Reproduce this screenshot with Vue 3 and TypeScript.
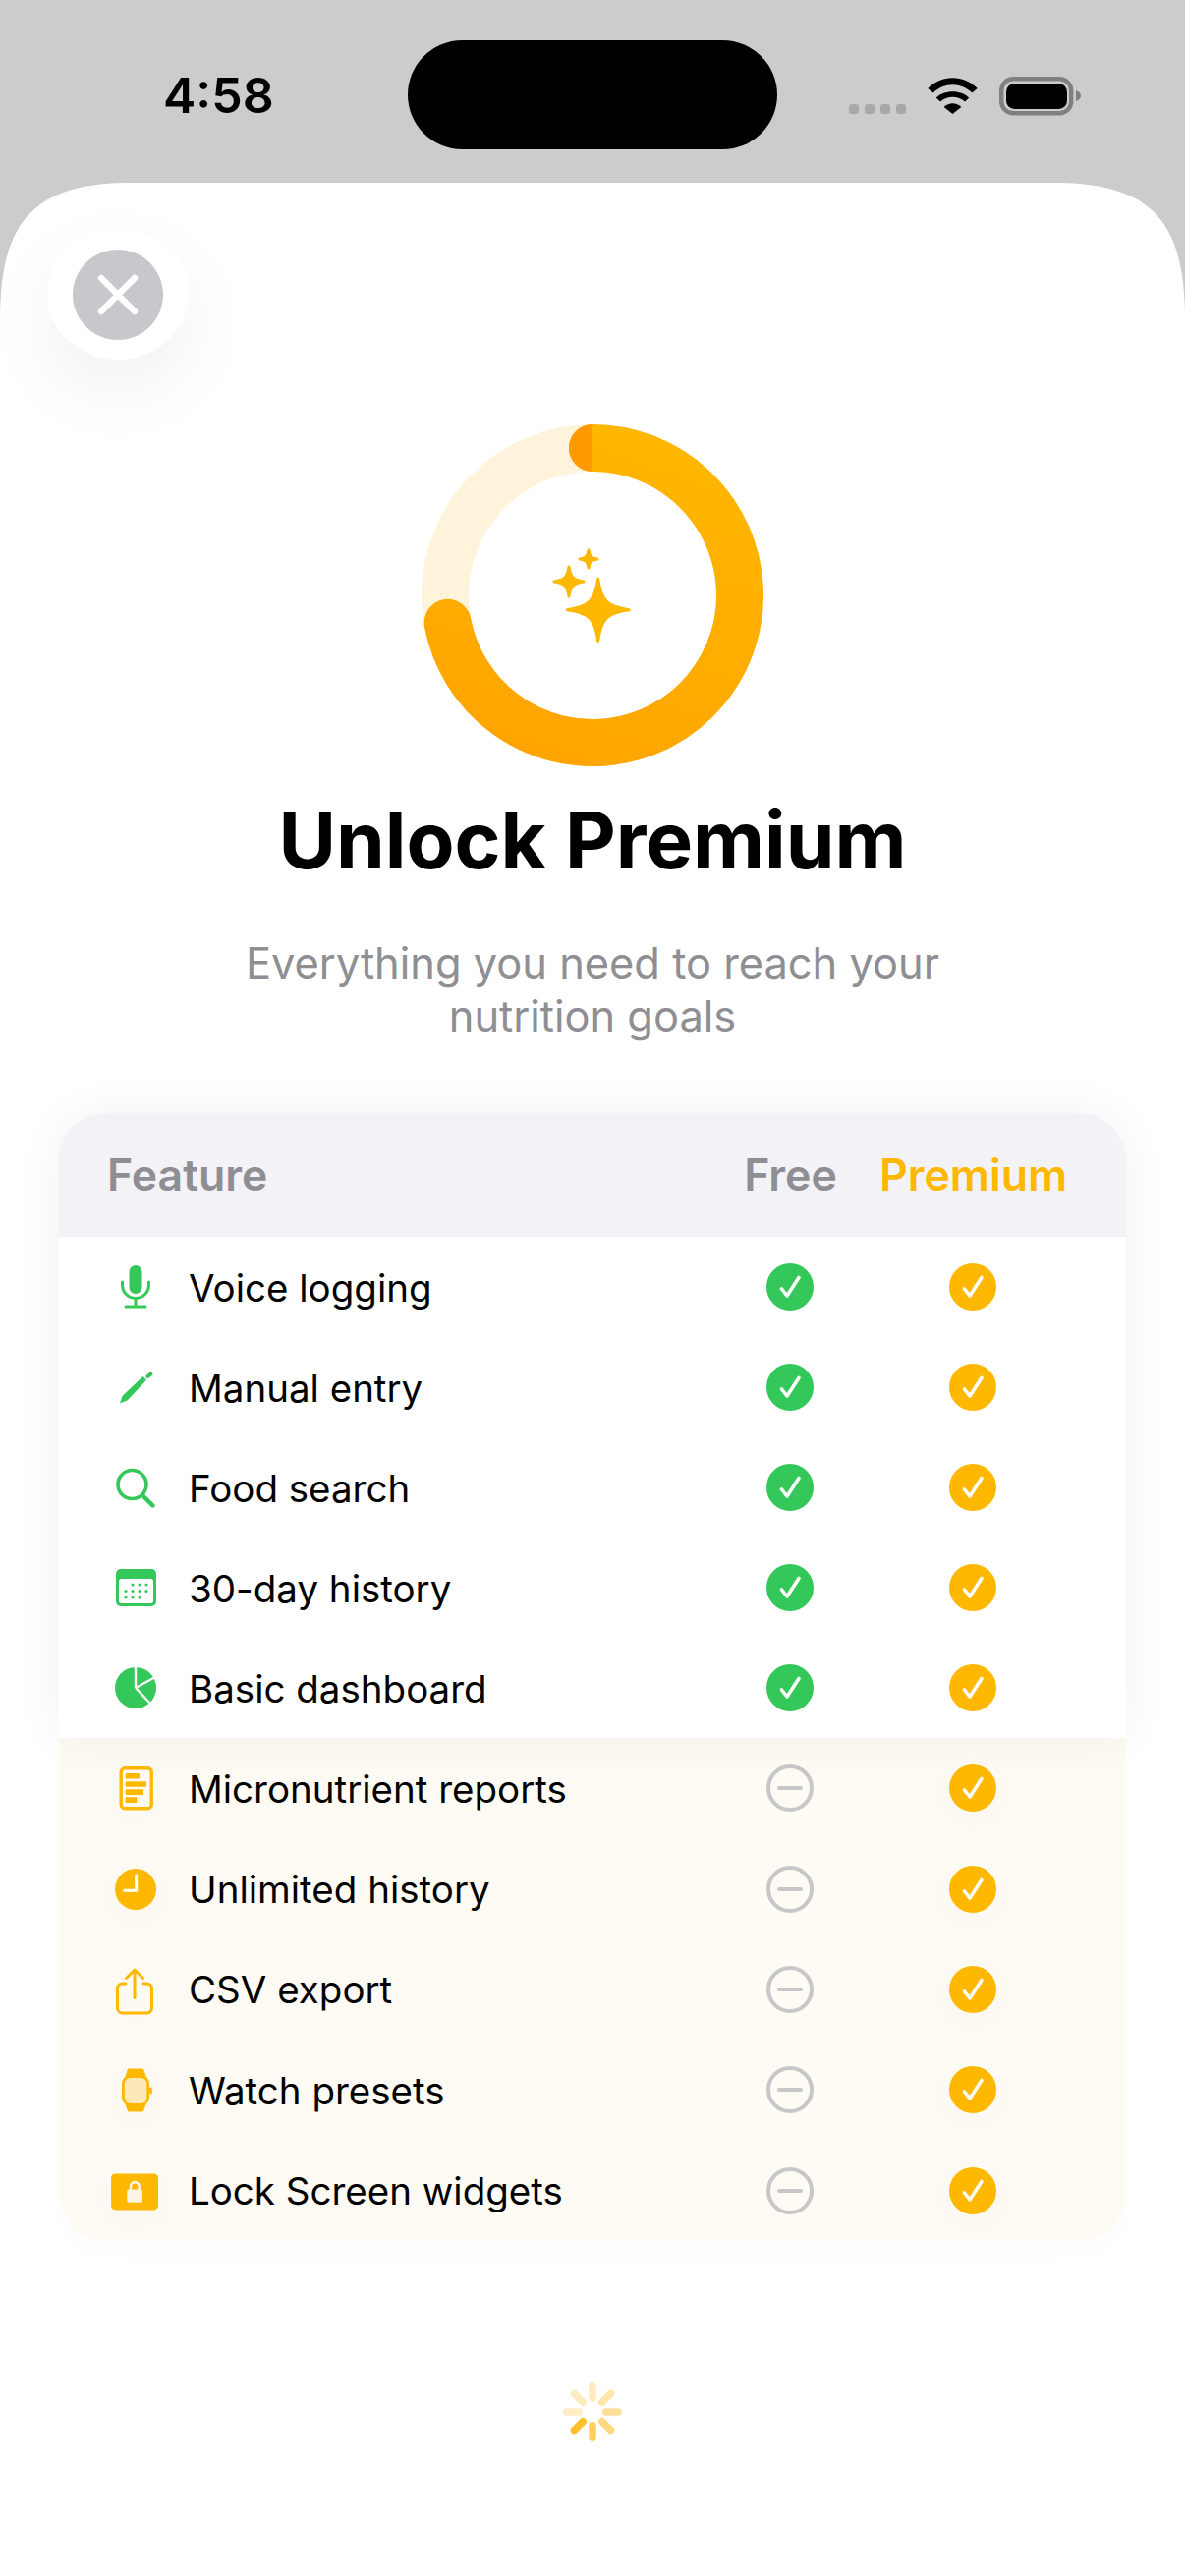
<template>
  <div class="screen">
    <header class="status">
      <span class="time">4:58</span>
      <div class="island"></div>
      <div class="indicators">
        <div class="dots"><i v-for="n in 4" :key="n"></i></div>
        <svg class="wifi" width="52" height="38" viewBox="0 0 52 38">
          <path d="M.3 11C14-3.5 37-3.5 50.7 11l-5.4 4.5C34 4.5 17 4.5 5.7 15.5Z" />
          <path d="M8.7 20.5C17 12 34 12 42.3 20.5L38 24.5C31.5 18 19.5 18 13 24.5Z" />
          <path d="M16.7 30C22 25 29 25 34.3 30L25.5 37Z" />
        </svg>
        <svg class="battery" width="83" height="40" viewBox="0 0 83 40">
          <rect x="2.2" y="2.2" width="71" height="35" rx="12" fill="none" stroke="#808080" stroke-width="4.4" />
          <rect x="7" y="7" width="62" height="26" rx="8.5" fill="#000" />
          <path d="M78 14v11c3-1 5-3 5-5.500s-2-4.500-5-5.500Z" fill="#808080" />
        </svg>
      </div>
    </header>

    <main class="sheet">
      <button class="close" type="button" aria-label="Close">
        <span class="close-disc">
          <svg width="44" height="44" viewBox="0 0 44 44">
            <path d="M5 5l34 34M39 5L5 39" stroke="#fff" stroke-width="6.500" stroke-linecap="round" />
          </svg>
        </span>
      </button>

      <svg class="ring" width="348" height="348" viewBox="0 0 348 348">
        <defs>
          <linearGradient id="ringGrad" gradientUnits="userSpaceOnUse" x1="240" y1="0" x2="120" y2="348">
            <stop offset="0" stop-color="#FFB800" />
            <stop offset="1" stop-color="#FFA400" />
          </linearGradient>
        </defs>
        <circle cx="174" cy="174" r="150" fill="none" stroke="#FFF3DB" stroke-width="48" />
        <path :d="ringPath" fill="none" stroke="url(#ringGrad)" stroke-width="48" stroke-linecap="round" />
        <path d="M174 0a24 24 0 0 0 0 48Z" fill="#FF9A00" />
        <path v-for="s in stars" :key="s.r" :d="s.d" fill="#FFB800" stroke="#FFB800" stroke-width="3" stroke-linejoin="round" />
      </svg>

      <h1 class="title">Unlock Premium</h1>
      <p class="subtitle">Everything you need to reach your<br />nutrition goals</p>

      <section class="table">
        <div class="free-part">
          <div class="head">
            <span class="head-feature">Feature</span>
            <span class="head-col">Free</span>
            <span class="head-col gold">Premium</span>
          </div>
          <div v-for="row in freeRows" :key="row.label" class="row">
            <svg class="icon" width="76" height="72" viewBox="0 0 76 72" fill="#34C759">
              <g v-if="row.icon === 'mic'">
                <rect x="31.500" y="14" width="13" height="29" rx="6.500" />
                <path d="M24.500 31v3a13.500 13.500 0 0 0 27 0v-3M38 48v8M28 56h20" fill="none" stroke="#34C759" stroke-width="3" stroke-linecap="round" />
              </g>
              <g v-else-if="row.icon === 'pencil'">
                <path d="M22 52.500l2.500-7.500L45.500 25l3.500 3.700L29.500 49.500Z" />
                <path d="M50.500 25l3-2.500" stroke="#34C759" stroke-width="4" stroke-linecap="round" />
              </g>
              <g v-else-if="row.icon === 'search'" fill="none" stroke="#34C759" stroke-linecap="round">
                <circle cx="34.500" cy="33" r="14.500" stroke-width="3.600" />
                <path d="M45.500 44.500L55.500 54.500" stroke-width="4.400" />
              </g>
              <g v-else-if="row.icon === 'calendar'">
                <rect x="18" y="17" width="41" height="38" rx="5" />
                <rect x="21" y="27" width="35" height="25" rx="2.500" fill="#fff" />
                <circle v-for="d in calendarDots" :key="d.x + '-' + d.y" :cx="d.x" :cy="d.y" r="1.600" />
              </g>
              <g v-else-if="row.icon === 'pie'">
                <circle cx="38" cy="36" r="21" />
                <path d="M38 36V13M38 36l21-11.500M38 36l16 17" fill="none" stroke="#fff" stroke-width="2.400" />
              </g>
            </svg>
            <span class="label">{{ row.label }}</span>
            <span class="cell">
              <svg width="48" height="48" viewBox="0 0 48 48">
                <circle cx="24" cy="24" r="24" fill="#34C759" />
                <path :d="checkPath" fill="none" stroke="#fff" stroke-width="3.600" stroke-linecap="round" stroke-linejoin="round" />
              </svg>
            </span>
            <span class="cell">
              <svg width="48" height="48" viewBox="0 0 48 48">
                <circle cx="24" cy="24" r="24" fill="#FFB800" />
                <path :d="checkPath" fill="none" stroke="#fff" stroke-width="3.600" stroke-linecap="round" stroke-linejoin="round" />
              </svg>
            </span>
          </div>
        </div>

        <div class="premium-part">
          <div v-for="row in premiumRows" :key="row.label" class="row row-premium">
            <svg class="icon glow" width="76" height="72" viewBox="0 0 76 72" fill="#FFB800">
              <g v-if="row.icon === 'report'">
                <rect x="23.200" y="15.700" width="31" height="41" rx="4" fill="none" stroke="#FFB800" stroke-width="3.400" />
                <rect x="27.700" y="21" width="14.300" height="5.600" rx="1" />
                <rect x="27.700" y="29.200" width="21.300" height="5.600" rx="1" />
                <rect x="27.700" y="37.300" width="18.300" height="5.600" rx="1" />
                <rect x="27.700" y="45.300" width="11.700" height="5.600" rx="1" />
              </g>
              <g v-else-if="row.icon === 'clock'">
                <circle cx="38" cy="36" r="21" />
                <path d="M38.700 21.700v15.600H26.700" fill="none" stroke="#fff" stroke-width="3" stroke-linecap="round" stroke-linejoin="round" />
              </g>
              <g v-else-if="row.icon === 'share'" fill="none" stroke="#FFB800" stroke-width="3" stroke-linecap="round" stroke-linejoin="round">
                <path d="M28 30h-3.500a5 5 0 0 0-5 5v20a5 5 0 0 0 5 5h25a5 5 0 0 0 5-5V35a5 5 0 0 0-5-5H46" />
                <path d="M37 44.500V16.500M28.500 24.500L37 16 45.500 24.500" />
              </g>
              <g v-else-if="row.icon === 'watch'">
                <path d="M30.500 15h15l2.500 7H28ZM28 51h20l-2.500 7h-15Z" stroke="#FFB800" stroke-linejoin="round" />
                <rect x="24" y="21" width="28" height="31.500" rx="8.500" />
                <rect x="52" y="33.500" width="2.800" height="7" rx="1.400" />
                <rect x="26.800" y="24" width="22.600" height="26" rx="6" fill="#FCE8B8" />
              </g>
              <g v-else-if="row.icon === 'lock'">
                <rect x="13" y="18.400" width="48" height="37" rx="4.500" />
                <rect x="29.300" y="34.400" width="15.700" height="13.300" rx="2" fill="#FBF3E4" />
                <path d="M33 35.400v-4a4.300 4.300 0 0 1 8.600 0v4" fill="none" stroke="#FBF3E4" stroke-width="2.600" />
              </g>
            </svg>
            <span class="label">{{ row.label }}</span>
            <span class="cell">
              <svg width="48" height="48" viewBox="0 0 48 48">
                <circle cx="24" cy="24" r="22" fill="none" stroke="#C7C7C7" stroke-width="4" />
                <path d="M13 24h22" stroke="#C7C7C7" stroke-width="4" stroke-linecap="round" />
              </svg>
            </span>
            <span class="cell">
              <svg class="glow" width="48" height="48" viewBox="0 0 48 48">
                <circle cx="24" cy="24" r="24" fill="#FFB800" />
                <path :d="checkPath" fill="none" stroke="#FDFBF5" stroke-width="3.600" stroke-linecap="round" stroke-linejoin="round" />
              </svg>
            </span>
          </div>
        </div>
      </section>

      <svg class="spinner" width="60" height="60" viewBox="-30 -30 60 60">
        <line
          v-for="r in rays"
          :key="r.angle"
          x1="0"
          y1="-13.700"
          x2="0"
          y2="-26.200"
          :stroke="r.color"
          stroke-width="7.500"
          stroke-linecap="round"
          :transform="`rotate(${r.angle})`"
        />
      </svg>
    </main>
  </div>
</template>

<script setup lang="ts">
interface Row {
  icon: string
  label: string
}

const freeRows: Row[] = [
  { icon: 'mic', label: 'Voice logging' },
  { icon: 'pencil', label: 'Manual entry' },
  { icon: 'search', label: 'Food search' },
  { icon: 'calendar', label: '30-day history' },
  { icon: 'pie', label: 'Basic dashboard' },
]

const premiumRows: Row[] = [
  { icon: 'report', label: 'Micronutrient reports' },
  { icon: 'clock', label: 'Unlimited history' },
  { icon: 'share', label: 'CSV export' },
  { icon: 'watch', label: 'Watch presets' },
  { icon: 'lock', label: 'Lock Screen widgets' },
]

const checkPath = 'M15.500 26l5.500 7 12-18.500'

const calendarDots: { x: number; y: number }[] = [
  ...[35, 42, 49].map((x) => ({ x, y: 33 })),
  ...[28, 35, 42, 49].map((x) => ({ x, y: 39.5 })),
  ...[28, 35, 42].map((x) => ({ x, y: 46 })),
]

const ringEndAngle = (259.3 * Math.PI) / 180
const ringEndX = 174 + 150 * Math.sin(ringEndAngle)
const ringEndY = 174 - 150 * Math.cos(ringEndAngle)
const ringPath = `M174 24A150 150 0 1 1 ${ringEndX.toFixed(2)} ${ringEndY.toFixed(2)}`

function star(cx: number, cy: number, r: number): string {
  const a = 0.09 * r
  const b = 0.3 * r
  const p = (x: number, y: number) => `${(cx + x).toFixed(2)} ${(cy + y).toFixed(2)}`
  return [
    `M${p(0, -r)}`,
    `C${p(a, -b)} ${p(b, -a)} ${p(r, 0)}`,
    `C${p(b, a)} ${p(a, b)} ${p(0, r)}`,
    `C${p(-a, b)} ${p(-b, a)} ${p(-r, 0)}`,
    `C${p(-b, -a)} ${p(-a, -b)} ${p(0, -r)}Z`,
  ].join('')
}

const stars = [
  { r: 31.5, d: star(179.7, 188.7, 31.5) },
  { r: 15, d: star(150, 160, 15) },
  { r: 9, d: star(170, 137, 9) },
]

const rays: { angle: number; color: string }[] = [
  { angle: 0, color: '#FFEBBD' },
  { angle: 45, color: '#FFE6AC' },
  { angle: 90, color: '#FFE09A' },
  { angle: 135, color: '#FFD980' },
  { angle: 180, color: '#FFCF58' },
  { angle: 225, color: '#FFC030' },
  { angle: 270, color: '#FFEDC6' },
  { angle: 315, color: '#FFEBC0' },
]
</script>

<style>
html,
body {
  margin: 0;
  background: #fff;
}
</style>

<style scoped>
.screen {
  width: 1206px;
  height: 2622px;
  background: #cccccc;
  display: flex;
  flex-direction: column;
  overflow: hidden;
  font-family: Inter, "Liberation Sans", sans-serif;
  color: #000;
}

.status {
  height: 186px;
  flex: none;
  box-sizing: border-box;
  padding: 41px 106px 0 166px;
  display: flex;
  align-items: flex-start;
}

.time {
  width: 249px;
  flex: none;
  margin-top: 26px;
  font-size: 50px;
  line-height: 60px;
  font-weight: 600;
}

.island {
  width: 376px;
  height: 111px;
  flex: none;
  background: #000;
  border-radius: 56px;
}

.indicators {
  margin-left: auto;
  margin-top: 37px;
  display: flex;
  align-items: flex-start;
}

.dots {
  display: flex;
  gap: 6px;
  margin-top: 28px;
}

.dots i {
  width: 10px;
  height: 10px;
  border-radius: 3px;
  background: #a8a8a8;
}

.wifi {
  margin-left: 22px;
  margin-top: 1px;
  display: block;
}

.battery {
  margin-left: 21px;
  display: block;
}

.sheet {
  flex: 1;
  background: #fff;
  clip-path: path("M0 2436V141C0 46 28 0 133 0H1073C1178 0 1206 46 1206 141V2436Z");
  display: flex;
  flex-direction: column;
  align-items: center;
  overflow: hidden;
}

.close {
  align-self: flex-start;
  width: 144px;
  height: 133px;
  margin: 47px 0 0 48px;
  padding: 0;
  border: 0;
  border-radius: 50%;
  background: #fff;
  box-shadow: 0 30px 80px rgba(0, 0, 0, 0.06);
  display: flex;
  align-items: center;
  justify-content: center;
}

.close-disc {
  width: 92px;
  height: 92px;
  border-radius: 50%;
  background: #c7c7cc;
  display: flex;
  align-items: center;
  justify-content: center;
}

.ring {
  display: block;
  margin-top: 66px;
  flex: none;
}

.title {
  margin: 27px 0 0;
  font-size: 80px;
  line-height: 96px;
  font-weight: 700;
  text-align: center;
}

.subtitle {
  margin: 50px 0 0;
  font-size: 43.4px;
  line-height: 54px;
  color: #8e8e93;
  text-align: center;
}

.table {
  width: 1086px;
  margin-top: 72px;
  flex: none;
}

.free-part {
  position: relative;
  z-index: 1;
  background: #fff;
  border-radius: 48px 48px 0 0;
  box-shadow: 0 0 50px rgba(0, 0, 0, 0.06);
}

.head {
  height: 126px;
  background: #f2f2f7;
  border-radius: 48px 48px 0 0;
  box-sizing: border-box;
  padding: 0 65px 0 49px;
  display: grid;
  grid-template-columns: 1fr 181px 186px;
  align-items: center;
  font-size: 44.6px;
  font-weight: 600;
  color: #8e8e93;
}

.head-col {
  text-align: center;
}

.gold {
  color: #ffb800;
}

.row {
  height: 102px;
  box-sizing: border-box;
  padding: 0 63px 0 40px;
  display: grid;
  grid-template-columns: 76px 1fr 186px 186px;
  align-items: center;
}

.row-premium {
  height: 102.4px;
}

.premium-part {
  background: #fdfbf4;
  border-radius: 0 0 48px 48px;
  box-shadow: 0 14px 30px rgba(0, 0, 0, 0.012);
}

.icon {
  display: block;
}

.glow {
  filter: drop-shadow(0 6px 14px rgba(0, 0, 0, 0.02));
}

.label {
  padding-left: 16px;
  padding-top: 1px;
  font-size: 38.5px;
  line-height: 48px;
}

.cell {
  display: flex;
  justify-content: center;
}

.spinner {
  display: block;
  margin-top: 144px;
  flex: none;
}
</style>
